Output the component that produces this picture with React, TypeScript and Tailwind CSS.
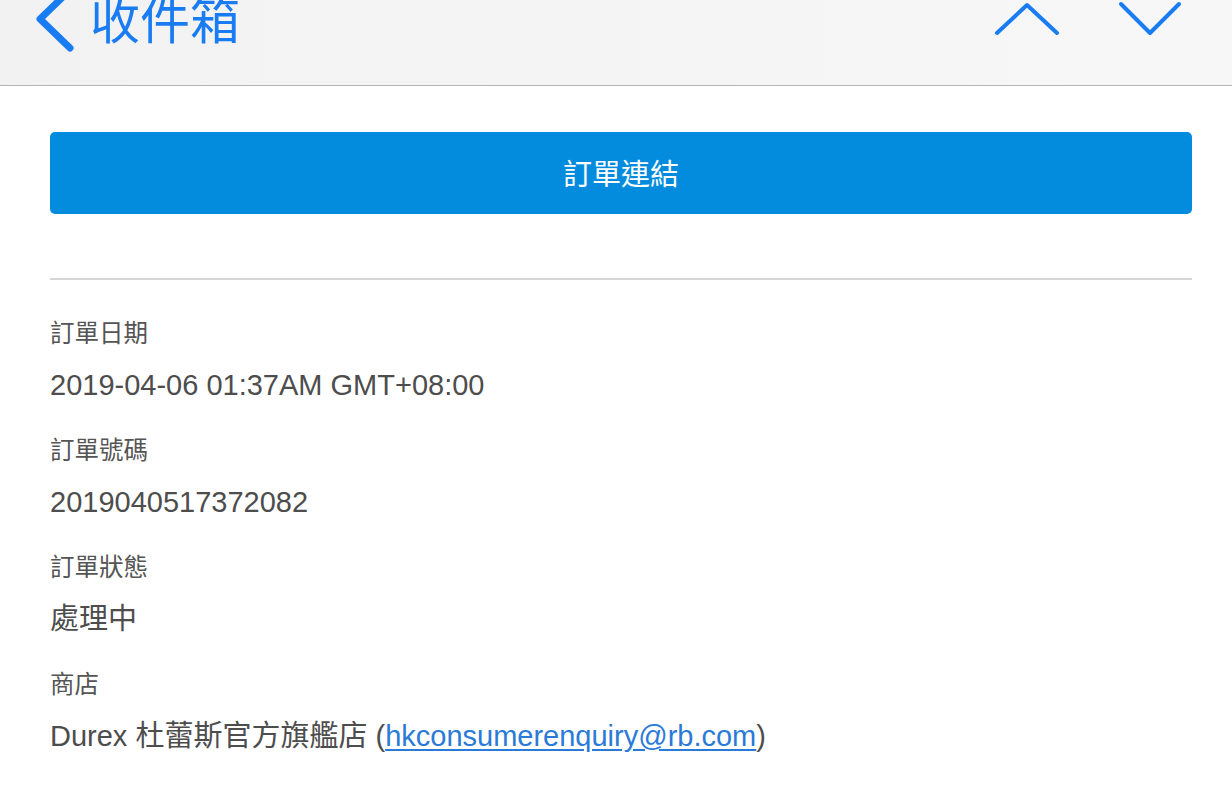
import React from "react";

const font = '"Liberation Sans", "Noto Sans CJK TC", "Noto Sans CJK SC", sans-serif';

function Item({ label, children }: { label: string; children: React.ReactNode }) {
  return (
    <div className="flex flex-col pb-[30px]">
      <div className="text-[24.5px] leading-[32px] text-[#555555]">{label}</div>
      <div className="mt-[15px] text-[29px] leading-[40px] text-[#4d4d4d] whitespace-nowrap">{children}</div>
    </div>
  );
}

export default function App() {
  return (
    <div className="w-[1232px] h-[787px] overflow-hidden bg-white" style={{ fontFamily: font }}>
      <div className="h-[86px] border-b border-[#b4b4b4] bg-gradient-to-r from-[#f2f2f2] to-[#f7f7f7] flex items-start justify-between overflow-hidden">
        <div className="flex items-start">
          <svg className="ml-[36px] mt-[-12px]" width="40" height="64" viewBox="0 0 40 64" fill="none">
            <path d="M34 2 L4 31 L34 60" stroke="#1a7cf2" strokeWidth="7" strokeLinecap="round" strokeLinejoin="round" />
          </svg>
          <div className="ml-[14px] mt-[-3px] text-[50px] leading-[50px] text-[#1a7cf2]">收件箱</div>
        </div>
        <div className="flex items-start mr-[49px]">
          <svg width="68" height="40" viewBox="0 0 68 40" fill="none">
            <path d="M4 33 L34 5 L64 33" stroke="#1a7cf2" strokeWidth="4" strokeLinecap="round" strokeLinejoin="round" />
          </svg>
          <svg className="ml-[56px]" width="66" height="40" viewBox="0 0 66 40" fill="none">
            <path d="M4 4 L33 33 L62 4" stroke="#1a7cf2" strokeWidth="4" strokeLinecap="round" strokeLinejoin="round" />
          </svg>
        </div>
      </div>
      <div className="pl-[50px] pr-[40px]">
        <div className="mt-[46px] h-[82px] pt-[5px] rounded-[5px] bg-[#038bdd] flex items-center justify-center text-white text-[29px]">
          訂單連結
        </div>
        <div className="mt-[64px] h-[2px] bg-[#d6d6d6]" />
        <div className="mt-[38px] flex flex-col">
          <Item label="訂單日期">2019-04-06 01:37AM GMT+08:00</Item>
          <Item label="訂單號碼">2019040517372082</Item>
          <Item label="訂單狀態">處理中</Item>
          <Item label="商店">
            Durex 杜蕾斯官方旗艦店 (
            <a className="text-[#2a7ad8] underline underline-offset-[3px]" href="#">
              hkconsumerenquiry@rb.com
            </a>
            )
          </Item>
        </div>
      </div>
    </div>
  );
}
